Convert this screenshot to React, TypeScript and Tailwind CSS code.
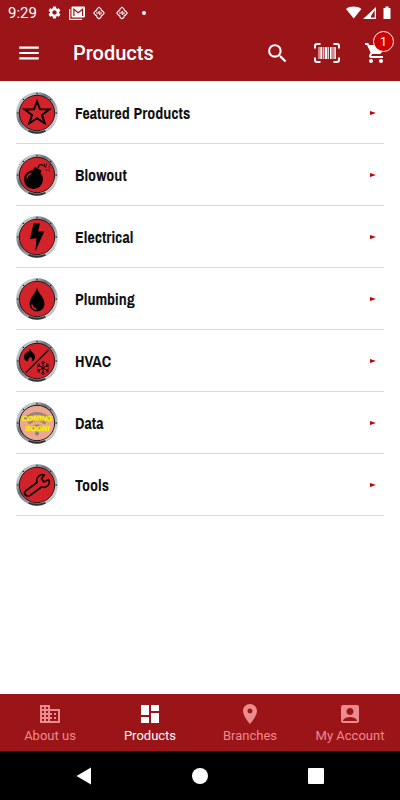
import type { ReactNode } from "react";
import {
  MdAccountBox,
  MdBusiness,
  MdDashboard,
  MdMenu,
  MdPlace,
  MdSearch,
  MdSettings,
  MdShoppingCart,
} from "react-icons/md";

function GemIcon() {
  return (
    <svg viewBox="0 0 12 14" className="h-3.5 w-3 fill-none stroke-white" aria-hidden="true">
      <path d="M3.500 4.500Q3.500 2.500 6 1.200 8.500 2.500 8.500 4.500M3.500 9.500Q3.500 11.500 6 12.800 8.500 11.500 8.500 9.500" strokeWidth="1.100" />
      <path d="M4.200 4.800H2.500L.8 7 2.500 9.200H4.200M7.800 4.800H9.500L11.200 7 9.500 9.200H7.800" strokeWidth="1.100" />
      <path d="M3 7H5.500L6.500 5M6.500 9 7 7H9" strokeWidth="1.200" />
    </svg>
  );
}

function StatusBar() {
  return (
    <div className="flex h-[25px] items-center px-2 text-white">
      <span className="w-[39px] text-[15px] leading-5">9:29</span>
      <MdSettings className="size-[15px]" aria-hidden="true" />
      <svg viewBox="0 0 16 14" className="ml-[7px] h-3.5 w-4" aria-hidden="true">
        <path d="M.7 3V13.3H13" fill="none" stroke="#fff" strokeWidth="1.2" />
        <rect x="2.5" y=".5" width="13.5" height="11" rx="1" fill="#fff" />
        <path d="M4.900 10V3.200L9.200 6.800 13.600 3.200V10" fill="none" stroke="#9b1418" strokeWidth="1.2" />
      </svg>
      <span className="ml-2 flex gap-[11px]">
        <GemIcon />
        <GemIcon />
      </span>
      <span className="ml-3.5 size-1 rounded-full bg-white" />
      <svg viewBox="0 0 46 14" className="ml-auto h-3.5 w-[46px] fill-white" aria-hidden="true">
        <path d="M0 3C4-.2 11-.2 15.400 3L7.700 12.500Z" />
        <path fillRule="evenodd" d="M17 13 30 1V13ZM24 11.700H28.700V4Z" />
        <path d="M24 13V7L29 3V4L24.800 8V11.700H30V13Z" />
        <path d="M38 2H39.500V.5H42.500V2H44.500V13H37.500V2Z" />
      </svg>
    </div>
  );
}

function BarcodeIcon() {
  return (
    <svg viewBox="0 0 26 20" className="h-5 w-[26px]" aria-hidden="true">
      <path
        d="M1 5.500V3Q1 1 3 1H6.500M19.500 1H23Q25 1 25 3V5.500M25 14.500V17Q25 19 23 19H19.500M6.500 19H3Q1 19 1 17V14.500"
        fill="none"
        stroke="#fff"
        strokeWidth="2"
      />
      <path d="M4.500 4h1v12h-1zM6.300 4h2v12h-2zM9.300 4h1v12h-1zM11 4h2.400v12H11zM14.200 4h.8v12h-.8zM16 4h1.600v12H16zM18.500 4h1v12h-1zM20.300 4h1.500v12h-1.500z" fill="#fff" />
    </svg>
  );
}

function Header() {
  return (
    <header className="bg-[#9b1418] text-white shadow-xs">
      <StatusBar />
      <div className="flex h-14 items-center pl-4 pr-3">
        <button type="button" aria-label="Open menu">
          <MdMenu className="size-[26px]" />
        </button>
        <h1 className="ml-[31px] text-xl font-medium">Products</h1>
        <div className="ml-auto flex items-center gap-6">
          <button type="button" aria-label="Search">
            <MdSearch className="size-[25px]" />
          </button>
          <button type="button" aria-label="Scan barcode">
            <BarcodeIcon />
          </button>
          <button type="button" aria-label="Cart, 1 item" className="relative">
            <MdShoppingCart className="size-6" />
            <span className="absolute -right-1.5 -top-2.5 flex size-[21px] items-center justify-center rounded-full border border-white bg-[#d10000] text-[13px] leading-4">
              1
            </span>
          </button>
        </div>
      </div>
    </header>
  );
}

function Badge({ id, fill = "#d3222a", children }: { id: string; fill?: string; children: ReactNode }) {
  return (
    <svg viewBox="0 0 42 42" className="size-[42px] shrink-0" aria-hidden="true">
      <defs>
        <linearGradient id={id} x1="0" y1="0" x2="1" y2="1">
          <stop offset="0" stopColor="#85898e" />
          <stop offset=".2" stopColor="#c4c8cc" />
          <stop offset=".38" stopColor="#6b7076" />
          <stop offset=".6" stopColor="#9a9ea3" />
          <stop offset=".8" stopColor="#d0d3d6" />
          <stop offset="1" stopColor="#5d6166" />
        </linearGradient>
      </defs>
      <circle cx="21" cy="21" r="20.900" fill={"url(#" + id + ")"} />
      <path d="M12 39.500Q21 44 30 39.500L29 38Q21 41 13 38Z" fill="#303236" />
      <g fill="#222">
        <circle cx="21" cy="1.800" r=".8" />
        <circle cx="1.800" cy="21" r=".8" />
        <circle cx="40.200" cy="21" r=".8" />
        <circle cx="7.500" cy="7.500" r=".8" />
        <circle cx="34.500" cy="7.500" r=".8" />
      </g>
      <circle cx="21" cy="21" r="17.700" fill={fill} stroke="#24191b" strokeWidth="1" />
      {children}
    </svg>
  );
}

const categories: { name: string; fill?: string; art: ReactNode }[] = [
  {
    name: "Featured Products",
    art: (
      <path
        d="M21 9.500 24 17.300 33.200 17.500 26 23 28.700 31.300 21 26.500 13.300 31.300 16 23 8.800 17.500 18 17.300Z"
        fill="none"
        stroke="#000"
        strokeWidth="2"
      />
    ),
  },
  {
    name: "Blowout",
    art: (
      <>
        <circle cx="17.500" cy="25.500" r="9.500" />
        <path d="M17 15.500 19 13 25.500 16.500 24 20Z" />
        <path d="M22 14Q23 9.500 26.500 11T30 13.500" fill="none" stroke="#000" strokeWidth="1.200" />
        <path
          d="M30.500 9.500V11.500M32.500 12.500 34.500 10.500M32.800 14H34.500M32 15.500 33.800 17.500M30.500 15.500V17M28 9.500 29 11"
          stroke="#000"
          strokeWidth=".7"
        />
        <path d="M10.800 24.500Q11.500 20.500 15.500 19.300" fill="none" stroke="#d3222a" strokeWidth="1.300" />
      </>
    ),
  },
  {
    name: "Electrical",
    art: <path d="M17.500 7.500H24L22 15.500H28.200L19.300 35.500 20.500 22.200 14 23Z" />,
  },
  {
    name: "Plumbing",
    art: (
      <>
        <path d="M21 9.500C22 15 28.500 19.500 28.500 26A7.500 7.500 0 0 1 13.500 26C13.500 19.500 20 15 21 9.500Z" />
        <path d="M15.800 26.500Q16.500 30.500 20.500 31.500" fill="none" stroke="#d3222a" strokeWidth="1.500" />
      </>
    ),
  },
  {
    name: "HVAC",
    art: (
      <>
        <path d="M10 32.500 32.500 10" stroke="#000" strokeWidth="1.300" />
        <path
          fillRule="evenodd"
          d="M14 8.500C14.500 12 19.500 13 19 17.500 18.700 20 17.500 21 15.500 21.500 17 20 16 18 14.500 16.500 14 18 11.800 18.500 12 21.500 8.500 20.500 7 17.500 8.500 14.500 9.500 12.500 13.500 12 14 8.500Z"
        />
        <g fill="none" stroke="#000" strokeWidth=".9">
          <path d="M27 21V35M21 24.500 33 31.500M33 24.500 21 31.500" />
          <path d="M25 22 27 24 29 22M25 34 27 32 29 34M21 27 23.700 26 23 23.300M33 29 30.300 30 31 32.700M33 27 30.300 26 31 23.300M21 29 23.700 30 23 32.700" />
        </g>
      </>
    ),
  },
  {
    name: "Data",
    fill: "#eba78f",
    art: (
      <>
        <g fill="none" stroke="#9b827b" strokeWidth="3">
          <path d="M8.500 17Q21 6 33.500 17" />
          <path d="M12.500 21.500Q21 14 29.500 21.500" />
          <path d="M16 26Q21 21.500 26 26" />
        </g>
        <circle cx="21" cy="31.500" r="2" fill="#85807c" />
        <g
          className="font-['Liberation_Sans_Narrow','Liberation_Sans',sans-serif]"
          fill="#f8f000"
          stroke="#f8f000"
          strokeWidth=".3"
          fontSize="7.500"
          fontWeight="700"
          fontStyle="italic"
          textAnchor="middle"
        >
          <text x="21" y="19">COMING</text>
          <text x="21.500" y="28.500">SOON!</text>
        </g>
      </>
    ),
  },
  {
    name: "Tools",
    art: (
      <path
        d="M9.500 27 21 18.500C19.500 13.500 24 9.500 28.500 11L25.500 14.500 28 18 32.500 15.500C35 20 31 24.500 25.500 23L14 31.500C10 33 7 30 9.500 27Z"
        fill="none"
        stroke="#000"
        strokeWidth="1.600"
        strokeLinejoin="round"
      />
    ),
  },
];

function CategoryList() {
  return (
    <ul className="px-4">
      {categories.map(({ name, fill, art }) => (
        <li key={name} className="border-b border-[#d9d9d9]">
          <a href="#" className="flex h-[61px] items-center pr-2 text-[#111]">
            <Badge id={"rim-" + name.split(" ")[0]} fill={fill}>
              {art}
            </Badge>
            <span className="ml-[17px] font-['Archivo_Narrow','Liberation_Sans_Narrow','Roboto_Condensed',Roboto,sans-serif] text-base font-bold leading-5">
              {name}
            </span>
            <svg viewBox="0 0 6 4" className="ml-auto h-1 w-1.5 fill-[#c40000]" aria-hidden="true">
              <path d="M0 0 6 2 0 4Z" />
            </svg>
          </a>
        </li>
      ))}
    </ul>
  );
}

const tabs = [
  { name: "About us", Icon: MdBusiness },
  { name: "Products", Icon: MdDashboard },
  { name: "Branches", Icon: MdPlace },
  { name: "My Account", Icon: MdAccountBox },
];

function TabBar() {
  return (
    <nav className="grid h-[57px] grid-cols-4 bg-[#9b1418]">
      {tabs.map(({ name, Icon }) => (
        <a
          key={name}
          href="#"
          aria-current={name === "Products" ? "page" : undefined}
          className="flex flex-col items-center pt-2 text-[13px] leading-4 text-[#ec8b8d] aria-[current]:text-white"
        >
          <Icon className="size-6" aria-hidden="true" />
          <span className="mt-0.5">{name}</span>
        </a>
      ))}
    </nav>
  );
}

function SystemBar() {
  return (
    <div className="flex h-[49px] items-center bg-black px-[26px] *:flex *:flex-1 *:justify-center">
      <button type="button" aria-label="Back">
        <svg viewBox="0 0 16 18" className="h-[18px] w-4 fill-white">
          <path d="M15 .5V17.500L.5 9Z" />
        </svg>
      </button>
      <button type="button" aria-label="Home">
        <span className="size-4 rounded-full bg-white" />
      </button>
      <button type="button" aria-label="Recent apps">
        <span className="size-4 rounded-[1px] bg-white" />
      </button>
    </div>
  );
}

export default function App() {
  return (
    <div className="flex min-h-screen flex-col bg-white font-[Roboto,sans-serif]">
      <Header />
      <main className="flex-1 pt-px">
        <CategoryList />
      </main>
      <TabBar />
      <SystemBar />
    </div>
  );
}
